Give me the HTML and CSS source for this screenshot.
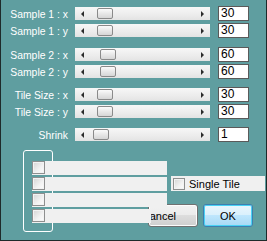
FILE: index.html
```html
<!DOCTYPE html>
<html lang="en-US">

<head>
    <meta charset="UTF-8">
    <title>Tile Settings</title>
    <link rel="stylesheet" href="styles.css">
</head>

<body>
    <div class="window">
        <div class="sliders">
            <div class="group">
                <div class="row">
                    <span class="label">Sample 1 : x</span>
                    <div class="track"><i class="arrow-left"></i><b class="thumb" style="margin-left: 13px"></b><i class="arrow-right"></i></div>
                    <div class="field">30</div>
                </div>
                <div class="row">
                    <span class="label">Sample 1 : y</span>
                    <div class="track"><i class="arrow-left"></i><b class="thumb" style="margin-left: 13px"></b><i class="arrow-right"></i></div>
                    <div class="field">30</div>
                </div>
            </div>
            <div class="group">
                <div class="row">
                    <span class="label">Sample 2 : x</span>
                    <div class="track"><i class="arrow-left"></i><b class="thumb" style="margin-left: 16px"></b><i class="arrow-right"></i></div>
                    <div class="field">60</div>
                </div>
                <div class="row">
                    <span class="label">Sample 2 : y</span>
                    <div class="track"><i class="arrow-left"></i><b class="thumb" style="margin-left: 16px"></b><i class="arrow-right"></i></div>
                    <div class="field">60</div>
                </div>
            </div>
            <div class="group">
                <div class="row">
                    <span class="label">Tile Size : x</span>
                    <div class="track"><i class="arrow-left"></i><b class="thumb" style="margin-left: 13px"></b><i class="arrow-right"></i></div>
                    <div class="field">30</div>
                </div>
                <div class="row">
                    <span class="label">Tile Size : y</span>
                    <div class="track"><i class="arrow-left"></i><b class="thumb" style="margin-left: 13px"></b><i class="arrow-right"></i></div>
                    <div class="field">30</div>
                </div>
            </div>
            <div class="group">
                <div class="row">
                    <span class="label">Shrink</span>
                    <div class="track"><i class="arrow-left"></i><b class="thumb" style="margin-left: 9px"></b><i class="arrow-right"></i></div>
                    <div class="field">1</div>
                </div>
            </div>
        </div>

        <div class="lower">
            <div class="groupbox">
                <div class="opt"><span class="check"></span></div>
                <div class="opt"><span class="check"></span></div>
                <div class="opt"><span class="check"></span></div>
                <div class="opt opt-short"><span class="check"></span></div>
            </div>
            <div class="side">
                <div class="single">
                    <span class="check check-small"></span>
                    <span>Single Tile</span>
                </div>
                <div class="buttons">
                    <button class="btn btn-cancel">Cancel</button>
                    <button class="btn btn-ok">OK</button>
                </div>
            </div>
        </div>
    </div>
</body>

</html>
```

FILE: styles.css
```css
body {
    margin: 0;
    padding: 0;
}

.window {
    width: 267px;
    height: 241px;
    box-sizing: border-box;
    background-color: #5f9ea0;
    border-style: solid;
    border-color: #1e2a2a;
    border-width: 0 1px 1px 1px;
    font-family: 'Liberation Sans', Arial, sans-serif;
    font-size: 11px;
    overflow: hidden;
}

.sliders {
    padding-top: 6px;
}

.group {
    margin-bottom: 6px;
}

.group:first-child {
    margin-bottom: 7px;
}

.row {
    display: flex;
    align-items: flex-start;
    height: 17px;
}

.label {
    width: 67px;
    text-align: right;
    color: #fff;
    font-size: 10.4px;
    line-height: 17px;
    white-space: nowrap;
}

.track {
    display: flex;
    align-items: center;
    margin-left: 7px;
    margin-top: 1px;
    width: 135px;
    height: 13px;
    box-sizing: border-box;
    background: linear-gradient(to bottom, #f7f7f7, #ececec 60%, #e3e3e3);
}

.arrow-left {
    margin-left: 6px;
    width: 0;
    height: 0;
    border-top: 3px solid transparent;
    border-bottom: 3px solid transparent;
    border-right: 3px solid #2b2b2b;
}

.arrow-right {
    margin-left: auto;
    margin-right: 6px;
    width: 0;
    height: 0;
    border-top: 3px solid transparent;
    border-bottom: 3px solid transparent;
    border-left: 3px solid #2b2b2b;
}

.thumb {
    width: 16px;
    height: 11px;
    box-sizing: border-box;
    border: 1px solid #8a8a8a;
    border-radius: 2px;
    background: linear-gradient(to bottom, #fbfbfb, #e8e8e8 50%, #d6d6d6);
}

.field {
    margin-left: 8px;
    width: 31px;
    height: 15px;
    box-sizing: border-box;
    border: 1px solid #5a5a5a;
    background-color: #fff;
    color: #000;
    font-size: 12px;
    line-height: 13px;
    padding-left: 2px;
}

.lower {
    display: flex;
    align-items: flex-start;
    margin-top: 1px;
}

.groupbox {
    margin-left: 22px;
    width: 30px;
    height: 82px;
    box-sizing: border-box;
    border: 1px solid #fff;
    border-radius: 3px;
    padding: 10px 0 0 8px;
}

.opt {
    position: relative;
    z-index: 1;
    display: flex;
    width: 135px;
    height: 14px;
    margin-bottom: 2px;
    background-color: #f0f0f0;
}

.opt-short {
    width: 119px;
}

.check {
    width: 13px;
    height: 13px;
    box-sizing: border-box;
    border: 1px solid #8e8f8f;
    background: linear-gradient(135deg, #d4d4d4, #f2f2f2 60%, #fdfdfd);
    box-shadow: inset 0 0 0 1px #f3f3f3;
}

.check-small {
    width: 12px;
    height: 12px;
}

.side {
    margin-left: 95px;
    padding-top: 26px;
}

.single {
    display: flex;
    align-items: center;
    gap: 4px;
    margin-left: 23px;
    width: 94px;
    height: 15px;
    padding-left: 2px;
    box-sizing: border-box;
    background-color: #f0f0f0;
    color: #000;
}

.buttons {
    display: flex;
    gap: 5px;
    margin-top: 13px;
}

.btn {
    display: flex;
    align-items: center;
    width: 50px;
    height: 23px;
    padding: 0;
    box-sizing: border-box;
    border-radius: 3px;
    font-family: 'Liberation Sans', Arial, sans-serif;
    font-size: 11px;
    color: #000;
    white-space: nowrap;
}

.btn-cancel {
    justify-content: flex-end;
    padding-right: 21px;
    border: 1px solid #707070;
    background: linear-gradient(to bottom, #f2f2f2, #ebebeb 50%, #dddddd 50%, #cfcfcf);
    box-shadow: inset 0 0 0 1px #fcfcfc;
}

.btn-ok {
    justify-content: center;
    border: 1px solid #3c7fb1;
    background: linear-gradient(to bottom, #eaf6fd, #d9f0fc 50%, #bee6fd 50%, #a7d9f5);
    box-shadow: inset 0 0 0 1px #48d2f5;
}
```
